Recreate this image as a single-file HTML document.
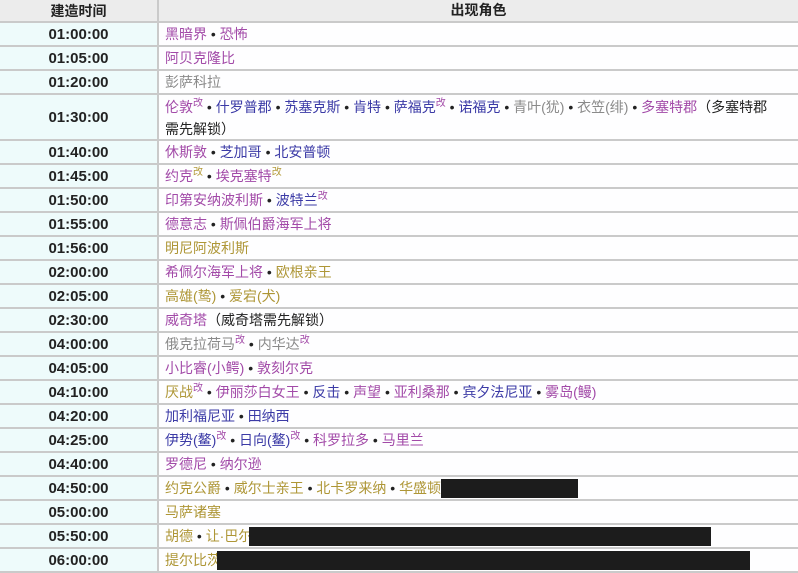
<!DOCTYPE html>
<html><head><meta charset="utf-8"><style>
*{margin:0;padding:0;box-sizing:border-box}
body{width:798px;height:572px;overflow:hidden;background:#fff;font-family:"Liberation Sans","Noto Sans CJK SC",sans-serif;font-size:14px;color:#222}
.r{display:flex;border-bottom:2px solid #cacaca;height:24px}
.t{width:159px;flex:none;background:#eefbfb;border-right:2px solid #cacaca;text-align:center;font-weight:bold;font-size:15px;line-height:22px;color:#222;display:flex;align-items:center;justify-content:center;padding-top:1px}
.c{padding-left:6px;line-height:22px;white-space:nowrap;position:relative;flex:1;background:#fefeff}
.h{height:23px;background:#ececec}
.h .t{background:#ececec;font-size:14px;padding-top:0}
.h .c{text-align:center;font-weight:bold;padding-left:0;background:#ececec;line-height:21px}
.p{color:#a24aa8}.b{color:#3b3aa6}.g{color:#8a8a8a}.y{color:#ae9636}
sup{font-size:10px;color:#b39a3a;vertical-align:6px;line-height:0}
sup.m{color:#a24aa8}
.bk{position:absolute;background:#1c1c1c;top:2px;height:19px}
</style></head><body>
<div class="r h"><div class="t">建造时间</div><div class="c">出现角色</div></div>
<div class="r"><div class="t">01:00:00</div><div class="c"><span class="p">黑暗界</span> • <span class="p">恐怖</span></div></div>
<div class="r"><div class="t">01:05:00</div><div class="c"><span class="p">阿贝克隆比</span></div></div>
<div class="r"><div class="t">01:20:00</div><div class="c"><span class="g">彭萨科拉</span></div></div>
<div class="r" style="height:46px"><div class="t">01:30:00</div><div class="c" style="line-height:22px;padding-top:1px"><span class="p">伦敦</span><sup class="m">改</sup> • <span class="b">什罗普郡</span> • <span class="b">苏塞克斯</span> • <span class="b">肯特</span> • <span class="b">萨福克</span><sup class="m">改</sup> • <span class="b">诺福克</span> • <span class="g">青叶(犹)</span> • <span class="g">衣笠(绯)</span> • <span class="p">多塞特郡</span>（多塞特郡<br>需先解锁）</div></div>
<div class="r"><div class="t">01:40:00</div><div class="c"><span class="p">休斯敦</span> • <span class="b">芝加哥</span> • <span class="b">北安普顿</span></div></div>
<div class="r"><div class="t">01:45:00</div><div class="c"><span class="p">约克</span><sup>改</sup> • <span class="p">埃克塞特</span><sup>改</sup></div></div>
<div class="r"><div class="t">01:50:00</div><div class="c"><span class="p">印第安纳波利斯</span> • <span class="b">波特兰</span><sup class="m">改</sup></div></div>
<div class="r"><div class="t">01:55:00</div><div class="c"><span class="p">德意志</span> • <span class="p">斯佩伯爵海军上将</span></div></div>
<div class="r"><div class="t">01:56:00</div><div class="c"><span class="y">明尼阿波利斯</span></div></div>
<div class="r"><div class="t">02:00:00</div><div class="c"><span class="p">希佩尔海军上将</span> • <span class="y">欧根亲王</span></div></div>
<div class="r"><div class="t">02:05:00</div><div class="c"><span class="y">高雄(鸷)</span> • <span class="y">爱宕(犬)</span></div></div>
<div class="r"><div class="t">02:30:00</div><div class="c"><span class="p">威奇塔</span>（威奇塔需先解锁）</div></div>
<div class="r"><div class="t">04:00:00</div><div class="c"><span class="g">俄克拉荷马</span><sup class="m">改</sup> • <span class="g">内华达</span><sup class="m">改</sup></div></div>
<div class="r"><div class="t">04:05:00</div><div class="c"><span class="p">小比睿(小鳄)</span> • <span class="p">敦刻尔克</span></div></div>
<div class="r"><div class="t">04:10:00</div><div class="c"><span class="y">厌战</span><sup class="m">改</sup> • <span class="p">伊丽莎白女王</span> • <span class="b">反击</span> • <span class="p">声望</span> • <span class="p">亚利桑那</span> • <span class="b">宾夕法尼亚</span> • <span class="p">雾岛(鳗)</span></div></div>
<div class="r"><div class="t">04:20:00</div><div class="c"><span class="b">加利福尼亚</span> • <span class="b">田纳西</span></div></div>
<div class="r"><div class="t">04:25:00</div><div class="c"><span class="b">伊势(鳌)</span><sup class="m">改</sup> • <span class="b">日向(鳌)</span><sup class="m">改</sup> • <span class="p">科罗拉多</span> • <span class="p">马里兰</span></div></div>
<div class="r"><div class="t">04:40:00</div><div class="c"><span class="p">罗德尼</span> • <span class="p">纳尔逊</span></div></div>
<div class="r"><div class="t">04:50:00</div><div class="c"><span class="y">约克公爵</span> • <span class="y">威尔士亲王</span> • <span class="y">北卡罗来纳</span> • <span class="y">华盛顿</span><div class="bk" style="left:282px;width:137px"></div></div></div>
<div class="r"><div class="t">05:00:00</div><div class="c"><span class="y">马萨诸塞</span></div></div>
<div class="r"><div class="t">05:50:00</div><div class="c"><span class="y">胡德</span> • <span class="y">让·巴尔</span><div class="bk" style="left:90px;width:462px"></div></div></div>
<div class="r"><div class="t">06:00:00</div><div class="c"><span class="y">提尔比茨</span><div class="bk" style="left:58px;width:533px"></div></div></div>
</body></html>
